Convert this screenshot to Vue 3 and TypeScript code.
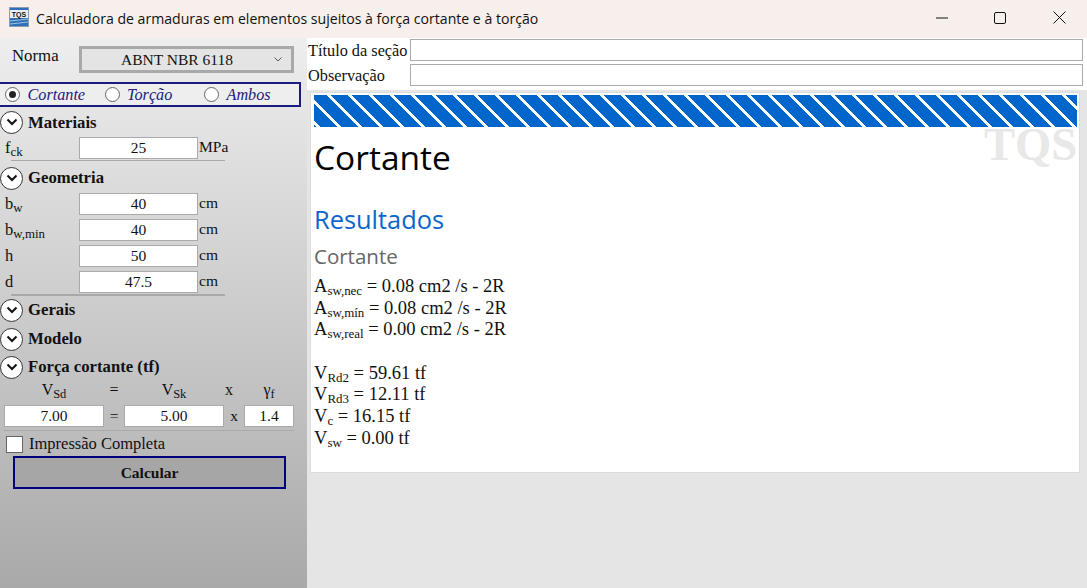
<script setup lang="ts">
const modes = [
  { label: 'Cortante', on: true },
  { label: 'Torção', on: false },
  { label: 'Ambos', on: false },
]
const geometry = [
  { name: 'b', sub: 'w', value: '40' },
  { name: 'b', sub: 'w,min', value: '40' },
  { name: 'h', sub: '', value: '50' },
  { name: 'd', sub: '', value: '47.5' },
]
const areas = [
  { sub: 'sw,nec', value: '0.08' },
  { sub: 'sw,mín', value: '0.08' },
  { sub: 'sw,real', value: '0.00' },
]
const forces = [
  { sub: 'Rd2', value: '59.61' },
  { sub: 'Rd3', value: '12.11' },
  { sub: 'c', value: '16.15' },
  { sub: 'sw', value: '0.00' },
]
</script>

<template>
  <div class="window">
    <header class="titlebar">
      <svg class="logo" viewBox="0 0 20 20" width="20" height="20">
        <rect x="0.5" y="0.5" width="19" height="19" fill="#e8eef4" stroke="#8a9db0" />
        <rect x="1" y="1" width="18" height="2" fill="#2f6fb5" />
        <rect x="1" y="11" width="18" height="8" fill="#2f6fb5" />
        <path d="M1 14l18-2M1 17l18-2" stroke="#9cc3e6" stroke-width="1" />
        <text x="10" y="9.6" text-anchor="middle" class="logo-text">TQS</text>
      </svg>
      <span class="title">Calculadora de armaduras em elementos sujeitos à força cortante e à torção</span>
      <div class="controls">
        <svg class="min" width="12" height="12" viewBox="0 0 12 12"><path d="M0 6h12" stroke="#111" stroke-width="1" /></svg>
        <svg width="12" height="12" viewBox="0 0 12 12"><rect x="0.5" y="0.5" width="11" height="11" rx="1.5" fill="none" stroke="#111" /></svg>
        <svg width="13" height="13" viewBox="0 0 13 13"><path d="M0.5 0.5l12 12M12.5 0.5l-12 12" stroke="#111" stroke-width="1" /></svg>
      </div>
    </header>

    <div class="body">
      <aside class="sidebar">
        <div class="norma">
          <span class="norma-label">Norma</span>
          <div class="select">
            <span>ABNT NBR 6118</span>
            <svg class="caret" width="8" height="5" viewBox="0 0 8 5"><path d="M0.5 0.5L4 4l3.5-3.5" fill="none" stroke="#555" /></svg>
          </div>
        </div>

        <div class="modes">
          <label v-for="m in modes" :key="m.label" class="mode">
            <span class="radio" :class="{ on: m.on }"></span>
            <span>{{ m.label }}</span>
          </label>
        </div>

        <div class="section first">
          <span class="chevron"><svg width="12" height="8" viewBox="0 0 12 8"><path d="M1.5 1.5L6 6l4.5-4.5" fill="none" stroke="#111" stroke-width="2" /></svg></span>
          <strong>Materiais</strong>
        </div>
        <div class="field one">
          <span class="name">f<sub>ck</sub></span>
          <div class="input wide">25</div>
          <span class="unit">MPa</span>
        </div>
        <div class="rule thin"></div>

        <div class="section geo">
          <span class="chevron"><svg width="12" height="8" viewBox="0 0 12 8"><path d="M1.5 1.5L6 6l4.5-4.5" fill="none" stroke="#111" stroke-width="2" /></svg></span>
          <strong>Geometria</strong>
        </div>
        <div class="fields">
          <div v-for="g in geometry" :key="g.sub + g.name" class="field">
            <span class="name">{{ g.name }}<sub v-if="g.sub">{{ g.sub }}</sub></span>
            <div class="input wide">{{ g.value }}</div>
            <span class="unit">cm</span>
          </div>
        </div>
        <div class="rule thick"></div>

        <div class="section gerais">
          <span class="chevron"><svg width="12" height="8" viewBox="0 0 12 8"><path d="M1.5 1.5L6 6l4.5-4.5" fill="none" stroke="#111" stroke-width="2" /></svg></span>
          <strong>Gerais</strong>
        </div>
        <div class="section tight">
          <span class="chevron"><svg width="12" height="8" viewBox="0 0 12 8"><path d="M1.5 1.5L6 6l4.5-4.5" fill="none" stroke="#111" stroke-width="2" /></svg></span>
          <strong>Modelo</strong>
        </div>
        <div class="section tighter">
          <span class="chevron"><svg width="12" height="8" viewBox="0 0 12 8"><path d="M1.5 1.5L6 6l4.5-4.5" fill="none" stroke="#111" stroke-width="2" /></svg></span>
          <strong>Força cortante (tf)</strong>
        </div>

        <div class="force-head">
          <span class="c1">V<sub>Sd</sub></span>
          <span class="c2">=</span>
          <span class="c3">V<sub>Sk</sub></span>
          <span class="c4 shifted">x</span>
          <span class="c5">γ<sub>f</sub></span>
        </div>
        <div class="force-row">
          <div class="input c1">7.00</div>
          <span class="c2">=</span>
          <div class="input c3">5.00</div>
          <span class="c4">x</span>
          <div class="input c5">1.4</div>
        </div>
        <div class="rule full"></div>

        <label class="check"><span class="box"></span>Impressão Completa</label>
        <button class="calc" type="button">Calcular</button>
      </aside>

      <main class="content">
        <div class="meta">
          <div class="meta-row">
            <span class="meta-label">Título da seção</span>
            <div class="meta-input"></div>
          </div>
          <div class="meta-row">
            <span class="meta-label">Observação</span>
            <div class="meta-input"></div>
          </div>
        </div>
        <div class="report-area">
          <article class="report">
            <div class="stripes"></div>
            <span class="watermark">TQS</span>
            <h1>Cortante</h1>
            <h2>Resultados</h2>
            <h3>Cortante</h3>
            <p v-for="a in areas" :key="a.sub">A<sub>{{ a.sub }}</sub> = {{ a.value }} cm2 /s - 2R</p>
            <p class="blank">&nbsp;</p>
            <p v-for="f in forces" :key="f.sub">V<sub>{{ f.sub }}</sub> = {{ f.value }} tf</p>
          </article>
        </div>
      </main>
    </div>
  </div>
</template>

<style>
html, body { margin: 0; padding: 0; background: #e5e5e5; }
</style>

<style scoped>
.window { width: 1087px; height: 588px; display: flex; flex-direction: column; overflow: hidden; font-family: "Liberation Serif", serif; color: #111; }
.titlebar { height: 38px; flex: none; display: flex; align-items: center; background: #f7efec; padding-left: 9px; box-sizing: border-box; }
.logo { flex: none; margin-bottom: 4px; }
.logo-text { font: bold 7px "Liberation Sans", sans-serif; fill: #111; }
.title { font: 14.1px "Open Sans", sans-serif; margin: 0 0 2px 7px; color: #111; white-space: nowrap; }
.controls { margin: 0 0 3px auto; display: flex; align-items: center; gap: 47px; padding-right: 21px; }
.min { position: relative; left: 1px; }

.body { flex: 1; display: flex; min-height: 0; }
.sidebar { width: 307px; flex: none; background: linear-gradient(#eeeeee, #a9a9a9); box-sizing: border-box; font-size: 16.5px; }

.norma { display: flex; align-items: center; height: 27px; margin-top: 8px; }
.norma-label { width: 79px; box-sizing: border-box; padding-left: 12px; margin-top: -7px; font-size: 16.8px; }
.select { width: 215px; height: 27px; box-sizing: border-box; border: 3px solid #a9a9a9; background: #e4e4e4; display: flex; align-items: center; justify-content: center; position: relative; font-size: 15.5px; padding-right: 19px; }
.caret { position: absolute; right: 9px; top: 8px; }

.modes { margin: 9px 0 0 -2px; width: 303px; height: 25px; box-sizing: border-box; border: 2px solid #1a1a80; display: flex; align-items: center; background: #eeeeee; color: #1a1a80; font-style: italic; font-size: 16.2px; padding: 1px 0 0 5px; }
.mode { display: flex; align-items: center; gap: 7.5px; width: 99.5px; flex: none; }
.radio { width: 15px; height: 15px; border: 1px solid #666; border-radius: 50%; background: #fff; position: relative; box-sizing: border-box; margin-top: -1px; }
.radio.on::after { content: ""; position: absolute; left: 3px; top: 3px; width: 7px; height: 7px; border-radius: 50%; background: #222; }

.section { display: flex; align-items: center; height: 24px; gap: 5px; font-size: 16.7px; }
.section strong { font-weight: bold; }
.section.first { margin-top: 3px; }
.section.first strong { padding-top: 2px; }
.section.geo { margin-top: 5px; }
.section.gerais { margin-top: 2px; }
.section.tight { margin-top: 5px; }
.section.tighter { margin-top: 4px; }
.chevron { width: 23px; height: 23px; flex: none; box-sizing: border-box; border: 1.5px solid #333; border-radius: 50%; background: #fff; display: flex; align-items: center; justify-content: center; }

.field { display: flex; align-items: center; height: 22px; margin-top: 4px; }
.field.one { margin-top: 3px; }
.name { width: 79px; box-sizing: border-box; padding-left: 5px; padding-bottom: 1px; white-space: nowrap; }
sub { font-size: 78%; vertical-align: -3px; line-height: 0; }
.input { height: 22px; box-sizing: border-box; border: 1px solid #aaaaaa; background: #fff; display: flex; align-items: center; justify-content: center; font-size: 15.5px; }
.input.wide { width: 119px; }
.unit { margin-left: 1px; font-size: 15.5px; padding-bottom: 2px; }
.fields .field:first-child { margin-top: 3px; }

.rule { background: #a9a9a9; }
.rule.thin { height: 1px; width: 214px; margin: 1px 0 0 11px; }
.rule.thick { height: 2px; width: 214px; margin: 1px 0 0 11px; }
.rule.full { height: 1px; width: 290px; margin: 3px 0 0 4px; }

.force-head, .force-row { display: flex; align-items: center; margin-left: 4px; width: 290px; text-align: center; }
.force-head { height: 24px; margin-top: 1px; padding-bottom: 4px; box-sizing: border-box; font-size: 16px; }
.force-row { height: 22px; margin-top: 1px; font-size: 15.5px; }
.c1 { width: 100px; }
.c2 { width: 20px; text-align: center; }
.c3 { width: 100px; }
.c4 { width: 20px; text-align: center; }
.c4.shifted { position: relative; left: -5px; }
.c5 { width: 50px; }

.check { display: flex; align-items: center; height: 18px; margin: 4px 0 0 6px; gap: 6px; }
.box { width: 17px; height: 17px; box-sizing: border-box; border: 1px solid #666; background: #fff; }
.calc { display: block; width: 273px; height: 33px; margin: 3px 0 0 13px; box-sizing: border-box; border: 2px solid #00007f; background: #a6a6a6; font: bold 15.5px "Liberation Serif", serif; color: #111; padding: 0; }

.content { flex: 1; display: flex; flex-direction: column; min-width: 0; }
.meta { height: 52px; flex: none; background: #fff; padding-top: 1px; box-sizing: border-box; }
.meta-row { display: flex; align-items: center; height: 22px; margin-bottom: 3px; }
.meta-label { width: 103px; flex: none; box-sizing: border-box; padding: 2px 0 0 1px; font-size: 16.3px; white-space: nowrap; }
.meta-input { width: 673px; height: 22px; box-sizing: border-box; border: 1px solid #aaaaaa; background: #fff; }

.report-area { flex: 1; background: #e5e5e5; padding: 2px 7px 0 3px; box-sizing: border-box; }
.report { height: 381px; box-sizing: border-box; background: #fff; border: 1px solid #dcdcdc; padding: 2px 2px 0 3px; position: relative; font-size: 18.5px; }
.report sub { font-size: 70%; }
.stripes { height: 32px; background: repeating-linear-gradient(45deg, #0066cc 0 1.6px, #fff 1.6px 4.4px, #0066cc 4.4px 14.85px); }
.watermark { position: absolute; right: 2px; top: 29px; font: bold 46.5px "Liberation Serif", serif; color: #e8e8e8; line-height: 46px; }
h1 { margin: 8px 0 0 0; font: 33.5px/44px "Open Sans", sans-serif; color: #000; }
h2 { margin: 23px 0 0 0; font: 25.4px/34px "Open Sans", sans-serif; color: #0b66cc; }
h3 { margin: 6px 0 0 0; font: 20.5px/28px "Open Sans", sans-serif; color: #666; }
p { margin: 0; height: 21.7px; line-height: 21.7px; white-space: nowrap; }
.report p:first-of-type { margin-top: 6px; }
</style>
